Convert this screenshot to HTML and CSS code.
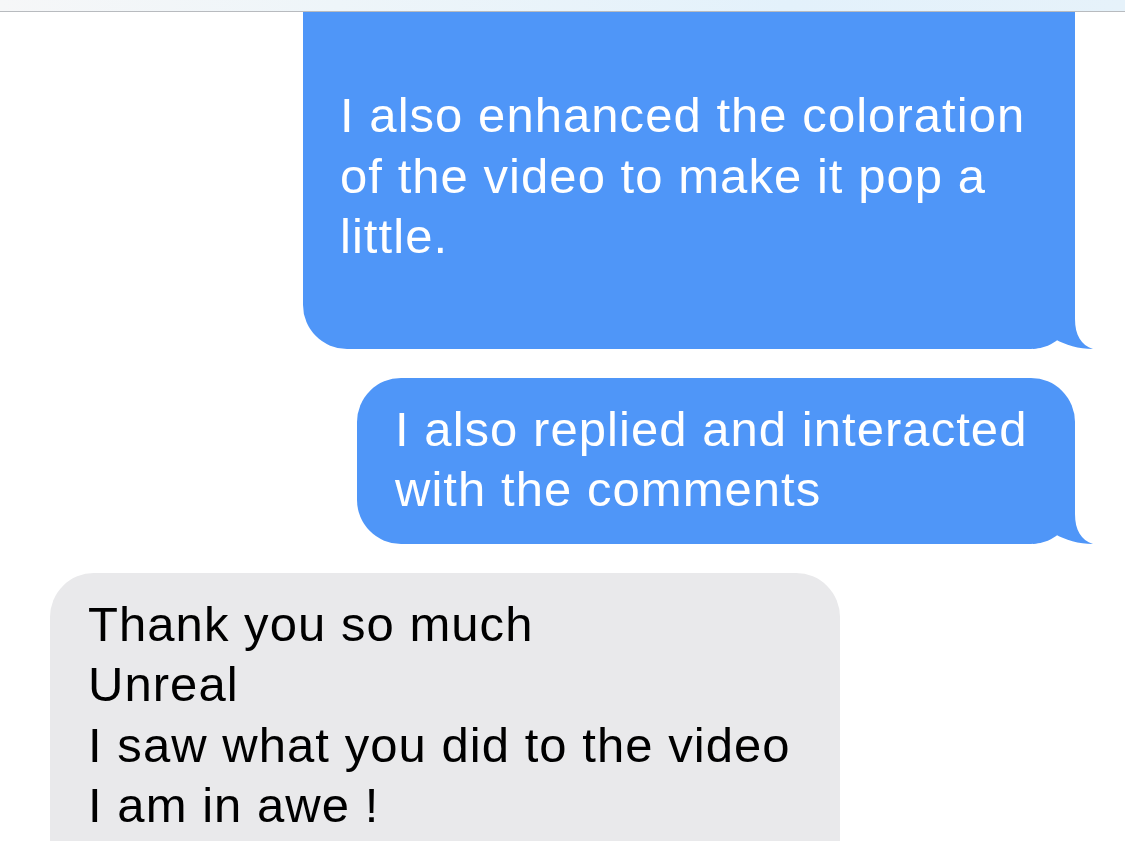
FILE: index.html
```html
<!DOCTYPE html>
<html lang="en">
<head>
<meta charset="utf-8">
<title>Messages</title>
<link rel="stylesheet" href="styles.css">
</head>
<body>
<div class="screen">
  <div class="topbar"></div>
  <div class="thread">
    <div class="msg sent first">
      <p>I also enhanced the coloration of the video to make it pop a little.</p>
      <svg class="tail" width="60" height="50" viewBox="0 0 60 50" aria-hidden="true"><path d="M0 0 H42 V20 C42 36 48 46 60 50 C46 50 32 46 22 40 C16 45 8 49 0 50 Z"/></svg>
    </div>
    <div class="msg sent second">
      <p>I also replied and interacted with the comments</p>
      <svg class="tail" width="60" height="50" viewBox="0 0 60 50" aria-hidden="true"><path d="M0 0 H42 V20 C42 36 48 46 60 50 C46 50 32 46 22 40 C16 45 8 49 0 50 Z"/></svg>
    </div>
    <div class="msg received">
      <p>Thank you so much<br>Unreal<br>I saw what you did to the video<br>I am in awe !</p>
    </div>
  </div>
</div>
</body>
</html>
```
FILE: styles.css
```css
html, body {
  margin: 0;
  padding: 0;
  background: #ffffff;
}

body {
  font-family: "Liberation Sans", Arial, sans-serif;
}

.screen {
  width: 1125px;
  height: 841px;
  overflow: hidden;
  display: flex;
  flex-direction: column;
}

.topbar {
  height: 11px;
  flex: none;
  border-bottom: 1px solid #b8bbbf;
  background: linear-gradient(90deg, #f6f7f8 0%, #eef5f9 30%, #e3f1fb 70%, #e6f2fa 100%);
  position: relative;
  z-index: 2;
}

.thread {
  flex: 1;
  overflow: hidden;
  display: flex;
  flex-direction: column;
  gap: 29px;
  padding: 0 50px;
}

.msg {
  position: relative;
  flex: none;
  border-radius: 44px;
  padding: 23px 34px 23px 38px;
  font-size: 49px;
  line-height: 60.5px;
  letter-spacing: 1.05px;
}

.msg p {
  margin: 0;
}

.sent {
  align-self: flex-end;
  background: #4f96f8;
  color: #ffffff;
}

.first {
  width: 701px;
  padding-left: 37px;
  margin-top: -60px;
  padding-top: 133px;
  padding-bottom: 82px;
}

.second {
  width: 646px;
  padding-top: 21px;
  padding-bottom: 24px;
}

.received {
  align-self: flex-start;
  width: 718px;
  background: #e9e9eb;
  color: #000000;
  padding-top: 21px;
  padding-bottom: 80px;
}

.tail {
  position: absolute;
  right: -18px;
  bottom: 0;
  fill: #4f96f8;
}
```
